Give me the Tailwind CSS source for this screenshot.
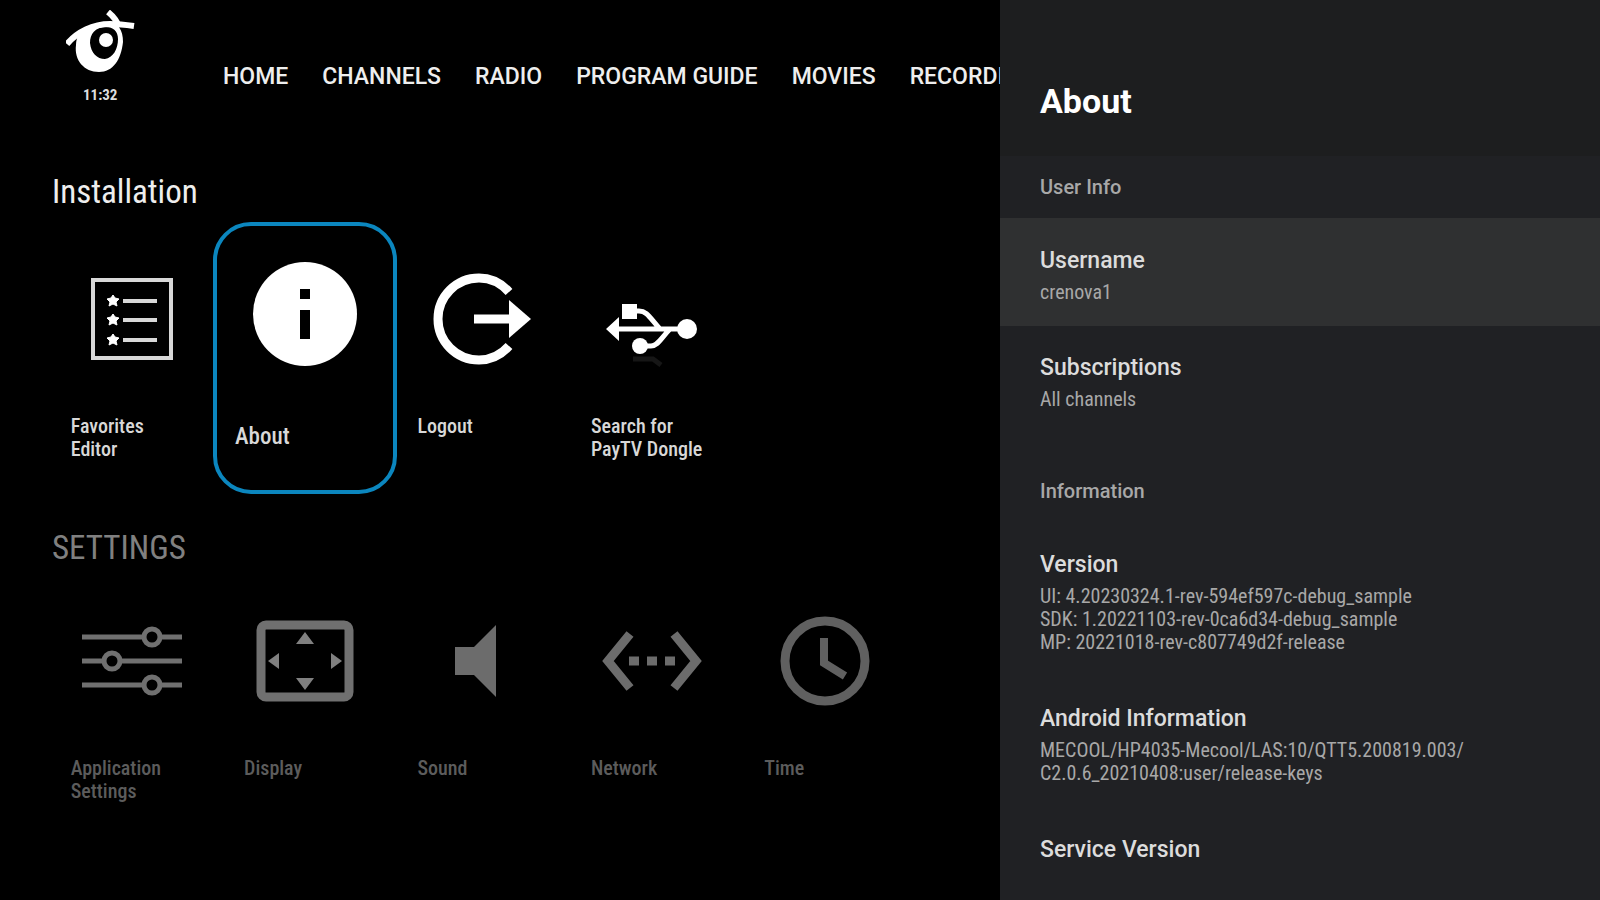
<!DOCTYPE html>
<html lang="en">
<head>
<meta charset="utf-8">
<title>About</title>
<script src="https://cdn.jsdelivr.net/npm/@tailwindcss/browser@4"></script>
</head>
<body class="bg-black text-white font-['Roboto_Condensed',Roboto,sans-serif]">
<div class="flex h-screen overflow-hidden">
  <main class="min-w-0 flex-1 overflow-hidden">
    <header class="flex h-[172px] items-start">
      <div class="flex w-[223px] shrink-0 flex-col items-start pl-[66px] pt-[10px]">
        <svg class="h-[64px] w-[70px]" viewBox="0 0 70 64" fill="none" role="img" aria-label="Logo">
          <path d="M1 34C11 22 27 14 44 14C54 14 61 15 68 16" stroke="#fff" stroke-width="6"/>
          <path d="M42 2C47 6 51 11 53 17" stroke="#fff" stroke-width="6"/>
          <path fill-rule="evenodd" fill="#fff" d="M13 24C20 16 30 12 42 12C52 12 57 20 57 32C55 50 47 62 33 62C18 62 8 50 10 35C10 31 11 27 13 24ZM40 17C29 17 24 24 24 33C25 43 31 49 39 49C47 48 52 39 52 29C52 21 47 17 40 17Z"/>
          <circle cx="40" cy="30" r="7" fill="#fff"/>
        </svg>
        <time class="ml-[17px] mt-[13px] text-[15px] font-bold leading-4 text-[#ddd]">11:32</time>
      </div>
      <nav class="flex gap-[34px] whitespace-nowrap pt-[63px] font-[Roboto] text-[23px] font-medium leading-7 text-[#eee]">
        <a href="#home">HOME</a>
        <a href="#channels">CHANNELS</a>
        <a href="#radio">RADIO</a>
        <a href="#guide">PROGRAM GUIDE</a>
        <a href="#movies">MOVIES</a>
        <a href="#recordings">RECORDINGS</a>
      </nav>
    </header>

    <section class="pr-[88px] pl-[45px]">
      <h2 class="pl-[7px] text-[33px] leading-10 text-[#eee]">Installation</h2>
      <div class="mt-[10px] grid h-[272px] grid-cols-5 text-[20px] font-medium leading-[23px] text-[#d8d8d8]">
        <button class="flex flex-col items-center pt-[46px] text-left">
          <svg class="h-[102px] w-[102px]" viewBox="0 0 102 102" fill="none" stroke="#d8d8d8">
            <rect x="12" y="12" width="78" height="78" stroke-width="4"/>
            <path d="M42 33H76M42 52H76M42 72H76" stroke-width="4"/>
            <path d="M32 27l2 3 4 1-3 3 1 4-4-2-4 2 1-4-3-3 4-1zM32 46l2 3 4 1-3 3 1 4-4-2-4 2 1-4-3-3 4-1zM32 66l2 3 4 1-3 3 1 4-4-2-4 2 1-4-3-3 4-1z" fill="#fff" stroke="#fff" stroke-width="1"/>
          </svg>
          <span class="mt-[45px] w-[122px]">Favorites<br>Editor</span>
        </button>
        <button class="-mx-[5px] flex flex-col items-center rounded-[38px] border-[4px] border-[#0b86be] pt-[35px] text-left text-[23px] leading-7">
          <svg class="h-[106px] w-[106px]" viewBox="0 0 106 106">
            <circle cx="53" cy="53" r="52" fill="#fff"/>
            <path d="M48 28h10v10H48zM48 49h10v29H48z" fill="#000"/>
          </svg>
          <span class="mt-[56px] w-[140px]">About</span>
        </button>
        <button class="flex flex-col items-center pt-[46px] text-left">
          <svg class="h-[102px] w-[106px]" viewBox="-2 0 106 102" fill="none" stroke="#fff">
            <path d="M82 24C74 15 64 10 52 10A41 41 0 0 0 52 92C64 92 74 87 82 78" stroke-width="9"/>
            <path d="M47 51H84" stroke-width="9"/>
            <path d="M82 32L104 51L82 70Z" fill="#fff" stroke="none"/>
          </svg>
          <span class="mt-[45px] w-[122px]">Logout</span>
        </button>
        <button class="flex flex-col items-center pt-[46px] text-left">
          <svg class="h-[102px] w-[102px]" viewBox="0 0 102 102" fill="none" stroke="#fff">
            <path d="M14 61H80M28 43H38C46 43 49 50 59 61M38 78H50C57 78 60 70 69 61" stroke-width="5"/>
            <path d="M5 61L18 49V73ZM21 36H36V51H21Z" fill="#fff" stroke="none"/>
            <circle cx="86" cy="61" r="10" fill="#fff" stroke="none"/>
            <circle cx="39" cy="78" r="8" fill="#fff" stroke="none"/>
            <path d="M32 91H52L60 97" stroke="#161616" stroke-width="5"/>
          </svg>
          <span class="mt-[45px] w-[122px] whitespace-nowrap">Search for<br>PayTV Dongle</span>
        </button>
      </div>
    </section>

    <section class="mt-[34px] pr-[88px] pl-[45px]">
      <h2 class="pl-[7px] text-[33px] leading-10 text-[#808080]">SETTINGS</h2>
      <div class="mt-[42px] grid grid-cols-5 text-[20px] font-medium leading-[23px] text-[#5c5c5c]">
        <button class="flex flex-col items-center text-left">
          <svg class="h-[102px] w-[102px]" viewBox="0 0 102 102" fill="none" stroke="#707070" stroke-width="5">
            <path d="M1 27H62M80 27H101M1 51H22M40 51H101M1 75H62M80 75H101"/>
            <circle cx="71" cy="27" r="8"/><circle cx="31" cy="51" r="8"/><circle cx="71" cy="75" r="8"/>
          </svg>
          <span class="mt-[45px] w-[122px]">Application<br>Settings</span>
        </button>
        <button class="flex flex-col items-center text-left">
          <svg class="h-[102px] w-[102px]" viewBox="0 0 102 102" fill="none">
            <rect x="7" y="15" width="88" height="72" rx="5" stroke="#707070" stroke-width="9"/>
            <path d="M51 22l9 12H42zM51 80l9-12H42zM14 51l11-8v16zM88 51l-11-8v16z" fill="#808080"/>
          </svg>
          <span class="mt-[45px] w-[122px]">Display</span>
        </button>
        <button class="flex flex-col items-center text-left">
          <svg class="h-[102px] w-[102px]" viewBox="0 0 102 102">
            <path d="M28 37H47L69 15V87L47 65H28Z" fill="#6c6c6c"/>
          </svg>
          <span class="mt-[45px] w-[122px]">Sound</span>
        </button>
        <button class="flex flex-col items-center text-left">
          <svg class="h-[102px] w-[102px]" viewBox="0 0 102 102" fill="none" stroke="#6c6c6c" stroke-width="9">
            <path d="M29 24L7 51L29 78M73 24L95 51L73 78"/>
            <path d="M28 51H38M46 51H56M64 51H74"/>
          </svg>
          <span class="mt-[45px] w-[122px]">Network</span>
        </button>
        <button class="flex flex-col items-center text-left">
          <svg class="h-[102px] w-[102px]" viewBox="0 0 102 102" fill="none" stroke="#606060" stroke-width="9">
            <circle cx="51" cy="51" r="40"/>
            <path d="M50 28V53L71 66" stroke-width="8"/>
          </svg>
          <span class="mt-[45px] w-[122px]">Time</span>
        </button>
      </div>
    </section>
  </main>

  <aside class="w-[37.5%] shrink-0 overflow-hidden bg-[#202124] text-[20px] leading-[23px] text-[#a8a8a8]">
    <h1 class="h-[156px] bg-[#1d1e1f] pl-10 pt-[81px] font-[Roboto] text-[34px] font-bold leading-10 text-white">About</h1>
    <h2 class="h-[62px] pl-10 pt-[20px] font-[Roboto] text-[20px] font-medium">User Info</h2>
    <div class="bg-[#2f3031] pt-[29px] pb-[22px] pl-10">
      <h3 class="mb-[6px] font-[Roboto] text-[23px] font-medium leading-7 text-[#dcdcdc]">Username</h3>
      <p>crenova1</p>
    </div>
    <div class="pt-[28px] pb-[22px] pl-10">
      <h3 class="mb-[6px] font-[Roboto] text-[23px] font-medium leading-7 text-[#dcdcdc]">Subscriptions</h3>
      <p>All channels</p>
    </div>
    <h2 class="mt-[27px] h-[62px] pl-10 pt-[20px] font-[Roboto] text-[20px] font-medium">Information</h2>
    <div class="pt-[29px] pb-[22px] pl-10">
      <h3 class="mb-[6px] font-[Roboto] text-[23px] font-medium leading-7 text-[#dcdcdc]">Version</h3>
      <p>UI: 4.20230324.1-rev-594ef597c-debug_sample<br>SDK: 1.20221103-rev-0ca6d34-debug_sample<br>MP: 20221018-rev-c807749d2f-release</p>
    </div>
    <div class="pt-[29px] pb-[22px] pl-10">
      <h3 class="mb-[6px] font-[Roboto] text-[23px] font-medium leading-7 text-[#dcdcdc]">Android Information</h3>
      <p>MECOOL/HP4035-Mecool/LAS:10/QTT5.200819.003/<br>C2.0.6_20210408:user/release-keys</p>
    </div>
    <div class="pt-[29px] pl-10">
      <h3 class="font-[Roboto] text-[23px] font-medium leading-7 text-[#dcdcdc]">Service Version</h3>
    </div>
  </aside>
</div>
</body>
</html>
